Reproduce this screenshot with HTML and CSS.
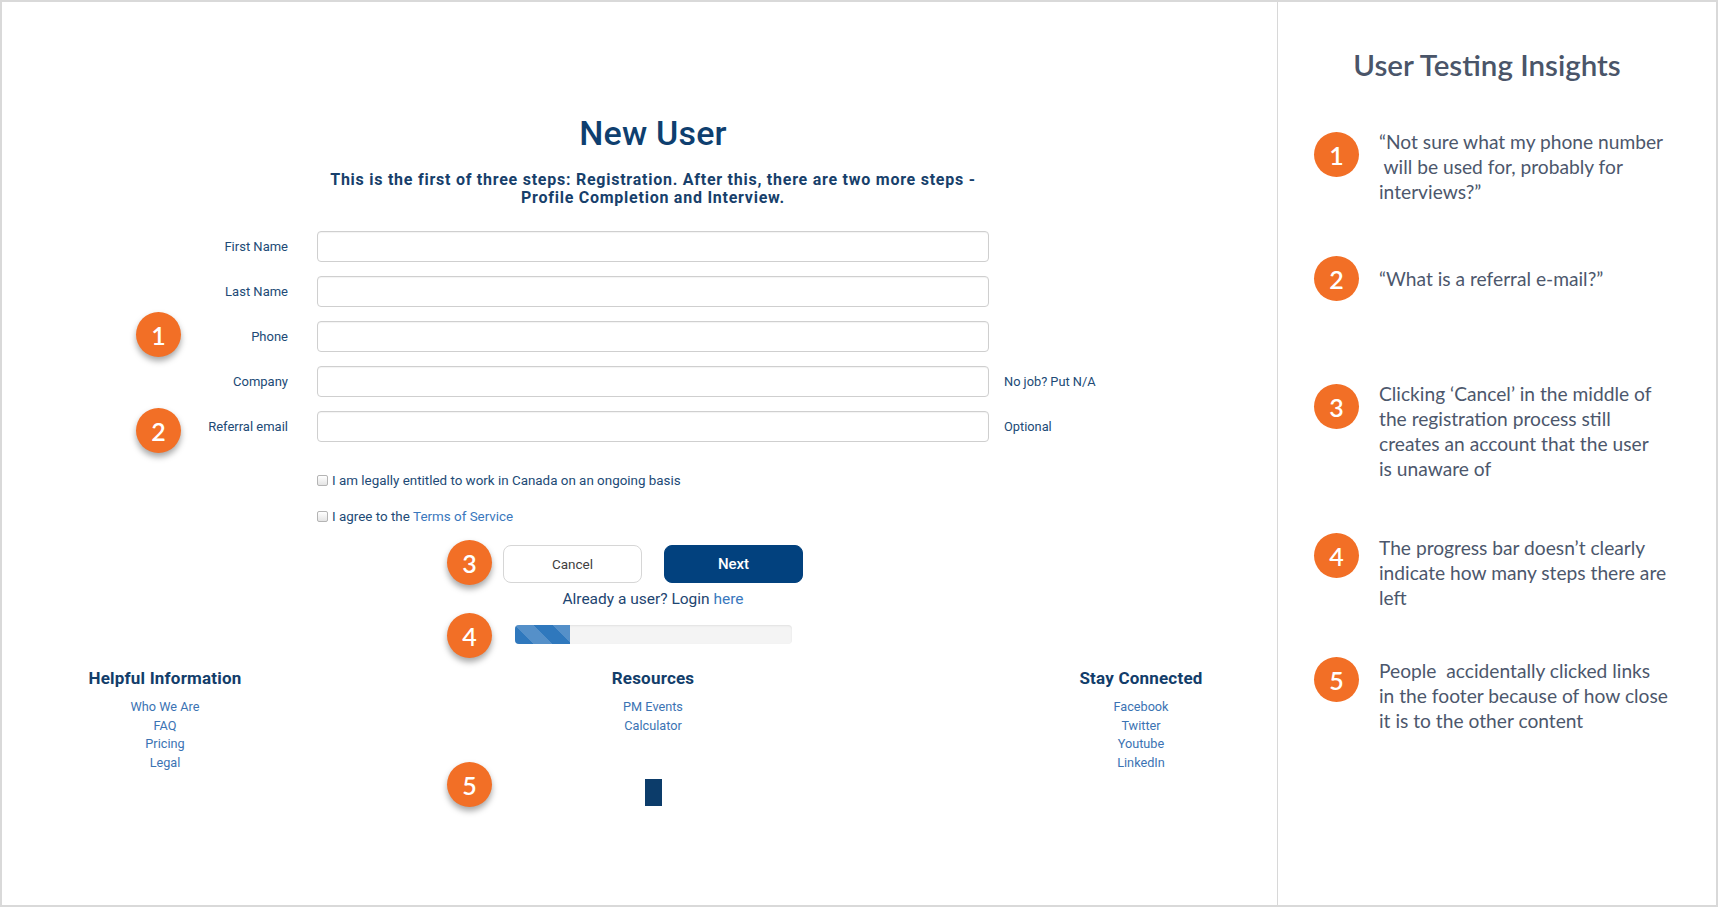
FILE: index.html
```html
<!DOCTYPE html>
<html lang="en">
<head>
<meta charset="utf-8">
<title>New User – User Testing Insights</title>
<link rel="stylesheet" href="styles.css">
</head>
<body>
<div class="frame">
  <main class="left">
    <div class="marker marker-1">1</div>
    <div class="marker marker-2">2</div>
    <div class="marker marker-3">3</div>
    <div class="marker marker-4">4</div>
    <div class="marker marker-5">5</div>

    <div class="col">
      <h1 class="title">New User</h1>
      <p class="subtitle">This is the first of three steps: Registration. After this, there are two more steps -<br>Profile Completion and Interview.</p>
    </div>

    <form class="fields">
      <div class="row"><label class="lbl">First Name</label><div class="input"></div><span class="note"></span></div>
      <div class="row"><label class="lbl">Last Name</label><div class="input"></div><span class="note"></span></div>
      <div class="row"><label class="lbl">Phone</label><div class="input"></div><span class="note"></span></div>
      <div class="row"><label class="lbl">Company</label><div class="input"></div><span class="note">No job? Put N/A</span></div>
      <div class="row"><label class="lbl">Referral email</label><div class="input"></div><span class="note">Optional</span></div>
    </form>

    <div class="checks">
      <div class="check"><span class="cb"></span>I am legally entitled to work in Canada on an ongoing basis</div>
      <div class="check"><span class="cb"></span>I agree to the&nbsp;<a class="link">Terms of Service</a></div>
    </div>

    <div class="col">
      <div class="actions">
        <button class="btn btn-cancel" type="button">Cancel</button>
        <button class="btn btn-next" type="button">Next</button>
      </div>
      <p class="login">Already a user? Login <a class="link">here</a></p>
      <div class="progress"><div class="progress-fill" style="width:20%"></div></div>
    </div>

    <footer class="footer">
      <div class="fcol">
        <h3 class="fhead">Helpful Information</h3>
        <ul class="flinks">
          <li>Who We Are</li>
          <li>FAQ</li>
          <li>Pricing</li>
          <li>Legal</li>
        </ul>
      </div>
      <div class="fcol">
        <h3 class="fhead">Resources</h3>
        <ul class="flinks">
          <li>PM Events</li>
          <li>Calculator</li>
        </ul>
        <div class="totop"></div>
      </div>
      <div class="fcol">
        <h3 class="fhead">Stay Connected</h3>
        <ul class="flinks">
          <li>Facebook</li>
          <li>Twitter</li>
          <li>Youtube</li>
          <li>LinkedIn</li>
        </ul>
      </div>
    </footer>
  </main>

  <aside class="right">
    <h2 class="insights-title">User Testing Insights</h2>
    <div class="insight insight-1">
      <div class="num">1</div>
      <p class="itext">“Not sure what my phone number<br>&nbsp;will be used for, probably for<br>interviews?”</p>
    </div>
    <div class="insight insight-2">
      <div class="num">2</div>
      <p class="itext">“What is a referral e-mail?”</p>
    </div>
    <div class="insight insight-3">
      <div class="num">3</div>
      <p class="itext">Clicking ‘Cancel’ in the middle of<br>the registration process still<br>creates an account that the user<br>is unaware of</p>
    </div>
    <div class="insight insight-4">
      <div class="num">4</div>
      <p class="itext">The progress bar doesn’t clearly<br>indicate how many steps there are<br>left</p>
    </div>
    <div class="insight insight-5">
      <div class="num">5</div>
      <p class="itext">People &nbsp;accidentally clicked links<br>in the footer because of how close<br>it is to the other content</p>
    </div>
  </aside>
</div>
</body>
</html>
```

FILE: styles.css
```css
* { box-sizing: border-box; }

html, body {
  margin: 0;
  padding: 0;
  background: #ffffff;
}

.frame {
  width: 1718px;
  height: 907px;
  border: 2px solid #d9d9d9;
  display: flex;
  overflow: hidden;
}

/* ---------- left: the form page ---------- */
.left {
  position: relative;
  width: 1276px;
  flex: 0 0 1276px;
  border-right: 1px solid #d8d8d8;
  padding-top: 111px;
  font-family: Roboto, "Liberation Sans", sans-serif;
  color: #1d4571;
}

.col {
  width: 672px;
  margin-left: 315px;
  display: flex;
  flex-direction: column;
  align-items: center;
}

.title {
  margin: 0;
  font-size: 34px;
  line-height: 40px;
  font-weight: 500;
  color: #0f3f6f;
  letter-spacing: 0.2px;
}

.subtitle {
  margin: 18px 0 0;
  font-size: 16px;
  line-height: 18px;
  font-weight: 700;
  letter-spacing: 0.75px;
  color: #173f6b;
  text-align: center;
  white-space: nowrap;
}

.fields {
  margin: 24px 0 0;
  display: flex;
  flex-direction: column;
  gap: 14px;
}

.row {
  display: grid;
  grid-template-columns: 315px 672px 1fr;
  align-items: center;
  height: 31px;
}

.lbl {
  text-align: right;
  padding-right: 29px;
  font-size: 13px;
  color: #214a76;
}

.input {
  height: 31px;
  border: 1px solid #cfcfcf;
  border-radius: 4px;
  background: #fff;
  box-shadow: inset 0 1px 1px rgba(0, 0, 0, 0.05);
}

.note {
  padding-left: 15px;
  font-size: 12.8px;
  color: #214a76;
}

.checks {
  margin: 29px 0 0 315px;
  display: flex;
  flex-direction: column;
  gap: 18.5px;
}

.check {
  display: flex;
  align-items: center;
  height: 18px;
  font-size: 13.4px;
  color: #214a76;
}

.cb {
  width: 11px;
  height: 11px;
  margin-right: 4px;
  border: 1px solid #b4b4b4;
  border-radius: 2px;
  background: linear-gradient(#ffffff, #e4e4e4);
}

.link {
  color: #3a78bd;
  text-decoration: none;
}

.actions {
  margin-top: 19.5px;
  display: flex;
  gap: 22px;
}

.btn {
  width: 139px;
  height: 38px;
  border-radius: 8px;
  font-family: Roboto, "Liberation Sans", sans-serif;
  cursor: pointer;
}

.btn-cancel {
  background: #fff;
  border: 1.5px solid #d6d6d6;
  color: #3f3f3f;
  font-size: 13.5px;
}

.btn-next {
  background: #02417e;
  border: 1px solid #02417e;
  color: #fff;
  font-size: 15px;
  font-weight: 500;
}

.login {
  margin: 7px 0 0;
  font-size: 15.5px;
  line-height: 18px;
  color: #1d4571;
}

.progress {
  margin-top: 17px;
  width: 277px;
  height: 19px;
  border-radius: 4px;
  background: #f4f4f4;
  box-shadow: inset 0 1px 2px rgba(0, 0, 0, 0.08);
  overflow: hidden;
}

.progress-fill {
  height: 100%;
  background-color: #2f78bd;
  background-image: linear-gradient(45deg,
    rgba(255, 255, 255, 0.18) 25%, transparent 25%,
    transparent 50%, rgba(255, 255, 255, 0.18) 50%,
    rgba(255, 255, 255, 0.18) 75%, transparent 75%, transparent);
  background-size: 38px 38px;
}

/* footer */
.footer {
  margin: 24.3px 0 0 43px;
  display: grid;
  grid-template-columns: 240px 240px 240px;
  column-gap: 248px;
}

.fcol {
  display: flex;
  flex-direction: column;
  align-items: center;
}

.fhead {
  margin: 0;
  font-size: 17px;
  line-height: 20px;
  font-weight: 700;
  letter-spacing: 0.2px;
  color: #123d6a;
}

.flinks {
  list-style: none;
  margin: 10px 0 0;
  padding: 0;
  text-align: center;
  font-size: 12.7px;
  line-height: 18.6px;
  color: #3b73b3;
}

.totop {
  margin-top: 44px;
  width: 17px;
  height: 27px;
  background: #0c3c6a;
}

/* annotation markers over the form */
.marker {
  position: absolute;
  width: 45px;
  height: 45px;
  border-radius: 50%;
  background: #f26f26;
  color: #fff;
  font-family: Lato, "Open Sans", sans-serif;
  font-size: 25px;
  font-weight: 600;
  display: flex;
  align-items: center;
  justify-content: center;
  box-shadow: 0 4px 6px rgba(0, 0, 0, 0.35);
}

.marker-1 { left: 134px; top: 310px; }
.marker-2 { left: 134px; top: 406px; }
.marker-3 { left: 445px; top: 538px; }
.marker-4 { left: 445px; top: 611px; }
.marker-5 { left: 445px; top: 760px; }

/* ---------- right: insights panel ---------- */
.right {
  flex: 1;
  padding: 45px 0 0 36px;
  font-family: Lato, "Open Sans", sans-serif;
  color: #4c576c;
}

.insights-title {
  margin: 0;
  padding-right: 56px;
  text-align: center;
  font-size: 29.5px;
  line-height: 36px;
  font-weight: 600;
  color: #4a5569;
}

.insight {
  display: flex;
  align-items: flex-start;
}

.num {
  flex: 0 0 45px;
  width: 45px;
  height: 45px;
  border-radius: 50%;
  background: #f26f26;
  color: #fff;
  font-size: 25px;
  font-weight: 600;
  display: flex;
  align-items: center;
  justify-content: center;
  margin-top: 3px;
}

.itext {
  margin: 0 0 0 20px;
  font-size: 19.2px;
  line-height: 25px;
  white-space: nowrap;
}

.insight-1 { margin-top: 46px; }
.insight-2 { margin-top: 52.3px; align-items: center; }
.insight-2 .num { margin-top: 0; }
.insight-3 { margin-top: 80.1px; }
.insight-3 .num { margin-top: 2.7px; }
.insight-4 { margin-top: 51px; }
.insight-4 .num { margin-top: 1px; }
.insight-4 .itext { margin-top: 3px; }
.insight-5 { margin-top: 46px; }
.insight-5 .num { margin-top: 1px; }
.insight-5 .itext { margin-top: 2px; }
```
